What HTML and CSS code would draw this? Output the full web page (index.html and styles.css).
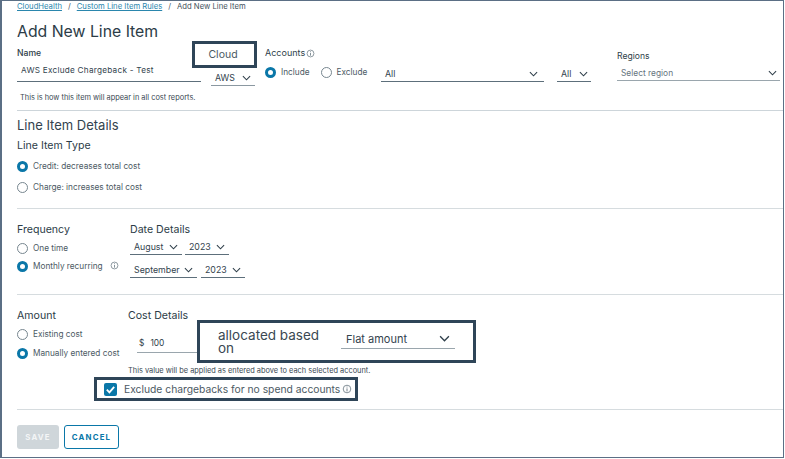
FILE: index.html
```html
<!DOCTYPE html>
<html lang="en">
<head>
<meta charset="utf-8">
<title>Add New Line Item</title>
<link rel="stylesheet" href="styles.css">
</head>
<body>
<svg class="defs" width="0" height="0" aria-hidden="true">
  <symbol id="chev" viewBox="0 0 10 6"><path d="M1 1l4 4 4-4" fill="none" stroke="#2f3f4a" stroke-width="1.2"/></symbol>
  <symbol id="info" viewBox="0 0 10 10"><circle cx="5" cy="5" r="3.8" fill="none" stroke="#66757f" stroke-width=".8"/><path d="M5 4.4v3M5 2.6v.9" stroke="#66757f" stroke-width=".9"/></symbol>
</svg>
<main class="frame">
  <nav class="crumbs"><a>CloudHealth</a><span>/</span><a>Custom Line Item Rules</a><span>/</span><b>Add New Line Item</b></nav>
  <h1>Add New Line Item</h1>

  <section class="top">
    <div class="name-col">
      <label class="lbl-strong">Name</label>
      <div class="name-input">AWS Exclude Chargeback - Test</div>
      <p class="help">This is how this item will appear in all cost reports.</p>
    </div>
    <div class="sel aws">AWS<svg class="chev"><use href="#chev"/></svg></div>
    <div class="acc-col">
      <div class="lbl-acc">Accounts<svg class="i"><use href="#info"/></svg></div>
      <div class="radios-inline">
        <span class="radio on"></span><span class="rt">Include</span>
        <span class="radio gap-l"></span><span class="rt">Exclude</span>
      </div>
    </div>
    <div class="sel all-wide">All<svg class="chev"><use href="#chev"/></svg></div>
    <div class="sel all-small">All<svg class="chev"><use href="#chev"/></svg></div>
    <div class="reg-col">
      <label class="lbl-reg">Regions</label>
      <div class="sel region">Select region<svg class="chev"><use href="#chev"/></svg></div>
    </div>
  </section>

  <section class="details">
    <h2>Line Item Details</h2>
    <h3>Line Item Type</h3>
    <div class="opt first"><span class="radio on"></span><span class="rt">Credit: decreases total cost</span></div>
    <div class="opt second"><span class="radio"></span><span class="rt">Charge: increases total cost</span></div>
  </section>

  <section class="freq two">
    <div class="left">
      <h3>Frequency</h3>
      <div class="opt o1"><span class="radio"></span><span class="rt">One time</span></div>
      <div class="opt o2"><span class="radio on"></span><span class="rt">Monthly recurring</span><svg class="i i-m"><use href="#info"/></svg></div>
    </div>
    <div class="right">
      <h3>Date Details</h3>
      <div class="dates d1">
        <div class="sel m1">August<svg class="chev"><use href="#chev"/></svg></div>
        <div class="sel y1">2023<svg class="chev"><use href="#chev"/></svg></div>
      </div>
      <div class="dates d2">
        <div class="sel m2">September<svg class="chev"><use href="#chev"/></svg></div>
        <div class="sel y1">2023<svg class="chev"><use href="#chev"/></svg></div>
      </div>
    </div>
  </section>

  <section class="amount two">
    <div class="left">
      <h3>Amount</h3>
      <div class="opt o1b"><span class="radio"></span><span class="rt">Existing cost</span></div>
      <div class="opt o3"><span class="radio on"></span><span class="rt">Manually entered cost</span></div>
    </div>
    <div class="right">
      <h3>Cost Details</h3>
      <div class="cost"><span>$</span><span>100</span></div>
      <p class="help cost-help">This value will be applied as entered above to each selected account.</p>
    </div>
  </section>

  <footer class="actions">
    <button class="btn save" type="button">SAVE</button>
    <button class="btn cancel" type="button">CANCEL</button>
  </footer>

  <div class="callout c-cloud">Cloud</div>
  <div class="callout c-alloc">
    <span class="alloc-text">allocated based on</span>
    <div class="sel flat">Flat amount<svg class="chev"><use href="#chev"/></svg></div>
  </div>
  <div class="callout c-excl">
    <span class="cb"><svg viewBox="0 0 12 12"><path d="M2.6 6.2l2.4 2.4 4.4-5" fill="none" stroke="#fff" stroke-width="1.7"/></svg></span>
    <span class="excl-text">Exclude chargebacks for no spend accounts</span><svg class="i i-x"><use href="#info"/></svg>
  </div>
</main>
</body>
</html>
```
FILE: styles.css
```css
* { box-sizing: border-box; }
html, body { margin: 0; padding: 0; background: #fff; }
body { width: 785px; height: 459px; overflow: hidden; font-family: Inter, "Liberation Sans", sans-serif; color: #2f3f4a; }
.defs { position: absolute; }
.frame { position: relative; width: 784px; height: 458px; border: 1px solid #5b6f85; border-left-width: 2px; padding-left: 15px; overflow: hidden; }
.crumbs { display: flex; gap: 6px; font-size: 7.7px; line-height: 10px; height: 10px; margin-top: 1px; color: #44525c; }
.crumbs a { color: #2a86ad; text-decoration: underline; }
.crumbs b { font-weight: 400; }
h1 { margin: 9px 0 0; height: 24px; font-size: 15.8px; line-height: 22px; font-weight: 400; color: #2c3c47; }
.top { display: flex; align-items: flex-start; height: 66px; width: 766px; border-bottom: 1px solid #cdd5da; }
.lbl-strong { display: block; margin-top: 2px; font-size: 8.6px; line-height: 12px; font-weight: 500; color: #2c3c47; }
.name-col { width: 184px; }
.name-input { height: 20px; margin-top: 3px; padding: 3px 4px 0; font-size: 8.2px; line-height: 11px; letter-spacing: .25px; border-bottom: 1px solid #5d6f7b; color: #33434e; }
.help { margin: 11px 0 0 3px; font-size: 7.4px; line-height: 9px; color: #3a4852; }
.sel { display: flex; align-items: center; justify-content: space-between; font-size: 8.8px; color: #33434e; border-bottom: 1px solid #5d6f7b; }
.chev { width: 9px; height: 6px; flex: none; }
.aws { width: 44px; height: 16px; margin: 25px 0 0 10px; padding: 0 4px; border-color: #8b98a1; }
.acc-col { width: 116px; margin-left: 10px; }
.lbl-acc { display: flex; align-items: center; gap: 1px; margin-top: 2px; font-size: 9px; line-height: 12px; }
.i { width: 9px; height: 9px; flex: none; }
.radios-inline { display: flex; align-items: center; margin-top: 8px; }
.radio { width: 11px; height: 11px; flex: none; border-radius: 50%; border: 1px solid #77868f; background: #fff; display: inline-block; }
.radio.on { border: 3.5px solid #0a77a8; }
.rt { margin-left: 5px; font-size: 8.25px; line-height: 11px; color: #4c5a64; }
.gap-l { margin-left: 11px; }
.all-wide { width: 163px; height: 18px; margin: 19px 0 0; padding: 2px 6px 0 4px; }
.all-small { width: 34px; height: 18px; margin: 19px 0 0 13px; padding: 2px 3px 0 4px; }
.reg-col { width: 163px; margin-left: 26px; }
.lbl-reg { display: block; margin-top: 5px; font-size: 8.6px; line-height: 12px; }
.region { height: 19px; padding: 3px 3px 0 4px; color: #66747e; font-size: 8.4px; border-color: #9aa6ad; }
h2 { margin: 0; font-size: 13px; line-height: 16px; font-weight: 400; color: #33434e; }
h3 { margin: 0; font-size: 10.6px; line-height: 14px; font-weight: 400; color: #2c3c47; }
.details { width: 766px; height: 98px; padding-top: 6px; border-bottom: 1px solid #d6dcdf; }
.details h3 { margin-top: 6px; }
.opt { display: flex; align-items: center; height: 11px; }
.first { margin-top: 8px; }
.second { margin-top: 10px; }
.two { display: flex; width: 766px; border-bottom: 1px solid #d6dcdf; }
.left { width: 113px; }
.freq { height: 86px; padding-top: 14px; }
.o1 { margin-top: 6px; }
.o1b { margin-top: 6px; }
.o2 { margin-top: 7px; }
.o3 { margin-top: 8px; }
.i-m { margin-left: 7px; margin-top: -3px; }
.right { flex: 1; }
.dates { display: flex; gap: 3px; }
.d1 { margin-top: 2px; }
.d2 { margin-top: 7px; gap: 4px; }
.dates .sel { height: 16px; padding: 0 4px; }
.m1 { width: 52px; }
.y1 { width: 44px; }
.m2 { width: 67px; }
.amount { height: 115px; padding-top: 14px; }
.amount .right { margin-left: -2px; }
.cost { display: flex; gap: 6px; width: 63px; height: 20px; margin: 10px 0 0 9px; padding: 5px 0 0 2px; border-bottom: 1px solid #9aa6ad; font-size: 8.4px; line-height: 11px; }
.cost-help { margin: 13px 0 0; }
.actions { display: flex; gap: 5px; padding-top: 15px; }
.btn { height: 24px; padding: 0; border-radius: 3px; font-family: inherit; font-size: 7.8px; font-weight: 700; letter-spacing: 1.2px; text-align: center; }
.save { width: 42px; border: 0; background: #cfd6da; color: #f3f5f6; }
.cancel { width: 55px; border: 1px solid #0a77a8; background: #fff; color: #0a77a8; }
.callout { position: absolute; background: #fff; border: 3px solid #2f4558; }
.c-cloud { left: 190px; top: 40px; width: 65px; height: 27px; display: flex; align-items: center; justify-content: center; padding-right: 3px; font-size: 10.5px; color: #4a5862; }
.c-alloc { left: 195px; top: 319px; width: 279px; height: 43px; display: flex; align-items: center; padding: 0 17px 0 18px; }
.alloc-text { width: 110px; flex: none; margin-right: 13px; font-size: 13.5px; line-height: 13px; color: #3a4852; }
.flat { width: 114px; height: 19px; margin-top: -5px; padding: 0 5px; font-size: 11px; border-color: #9aa6ad; }
.flat .chev { width: 11px; height: 7px; }
.c-excl { left: 92px; top: 376px; width: 264px; height: 24px; display: flex; align-items: center; padding-left: 7px; }
.cb { width: 13px; height: 13px; border-radius: 2px; background: #0a77a8; flex: none; display: flex; }
.cb svg { width: 13px; height: 13px; }
.excl-text { margin-left: 7px; font-size: 10.3px; color: #4c5a64; white-space: nowrap; }
.i-x { margin-left: 2px; width: 10px; height: 10px; }
```
